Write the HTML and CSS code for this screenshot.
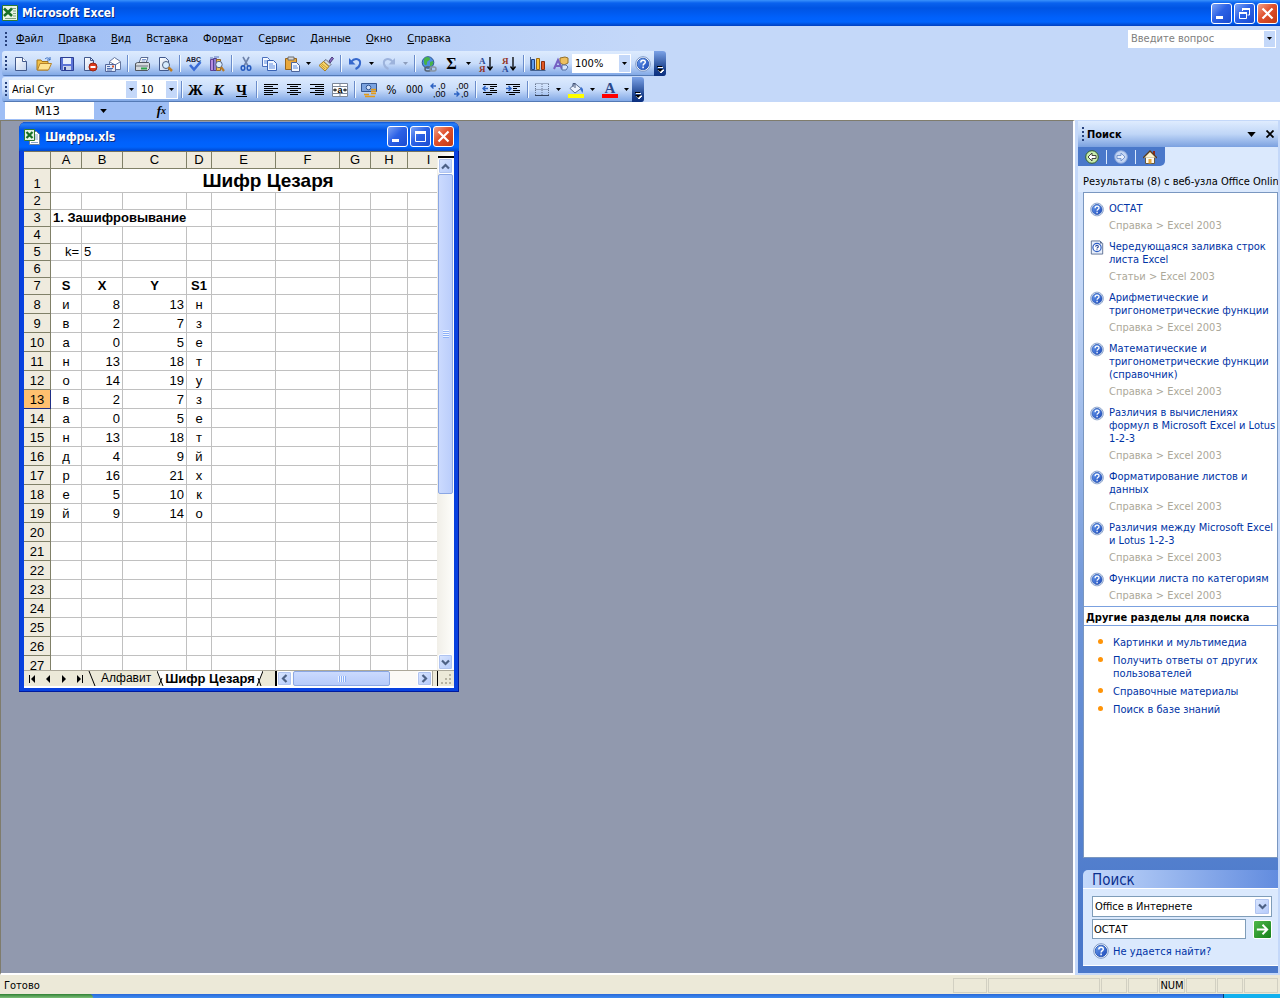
FILE: index.html
```html
<!DOCTYPE html>
<html lang="ru">
<head>
<meta charset="utf-8">
<title>Microsoft Excel</title>
<link rel="stylesheet" href="styles.css">
</head>
<body>
<svg class="gradients" aria-hidden="true">
  <linearGradient id="gBlue" x1="0" y1="0" x2="1" y2="1"><stop offset="0" stop-color="#6b9ff0"/><stop offset="1" stop-color="#1a46b8"/></linearGradient>
  <linearGradient id="gSheet" x1="0" y1="0" x2="1" y2="1"><stop offset="0" stop-color="#fff"/><stop offset="1" stop-color="#c3d3ee"/></linearGradient>
</svg>
<svg class="symbols" aria-hidden="true">
  <symbol id="excel" viewBox="0 0 16 16"><path d="M.5.500h15v15H.5z" fill="#e9f4e4" stroke="#2d7a33"/><path d="M10 3.500h4M11 6h3M11 8.500h3M11 11h3M3 13.500h11" stroke="#7fa57f"/><path d="M2 3.500l8 7.500M10 3.500L2 11" stroke="#187026" stroke-width="2.600"/></symbol>
  <symbol id="workbook" viewBox="0 0 16 16"><path d="M5.500 2.500h7l3 3v10h-10z" fill="#fff" stroke="#6b7f9b"/><path d="M11 6h3M11 8h3M7 13.500h7M11 10h3" stroke="#8aa3c8"/><path d="M.5.500h10v11H.5z" fill="#e5f3e2" stroke="#2d7a33"/><path d="M2.500 3l6 6M8.500 3l-6 6" stroke="#187026" stroke-width="2.200"/></symbol>
  <symbol id="down" viewBox="0 0 5 3"><path d="M0 0h5L2.500 3z" fill="currentColor"/></symbol>
  <symbol id="new" viewBox="0 0 16 16"><path d="M2.500 1.500h7l4 4v9h-11z" fill="url(#gSheet)" stroke="#42598c"/><path d="M9.500 1.500v4h4" fill="#fff" stroke="#42598c"/></symbol>
  <symbol id="open" viewBox="0 0 16 16"><path d="M1 14V4h4l1 1.500h6V14z" fill="#f2c14a" stroke="#a5761b"/><path d="M1.500 14L4 7.500h11.500L12.500 14z" fill="#ffe493" stroke="#b5822a"/><path d="M9 3c2-2 4-1 5 1m0-3v3h-3" fill="none" stroke="#356bc0"/></symbol>
  <symbol id="save" viewBox="0 0 16 16"><path d="M1.500 1.500h13v13h-12l-1-1z" fill="#5b73d6" stroke="#2b3f93"/><path d="M4 2h8v6H4z" fill="#e6eefc"/><path d="M4 10h8v4H4z" fill="#c9d3ea"/><path d="M5 11h2v3H5z" fill="#2b3f93"/></symbol>
  <symbol id="perm" viewBox="0 0 16 16"><path d="M2.500 1.500h6l3 3v10h-9z" fill="url(#gSheet)" stroke="#42598c"/><path d="M8.500 1.500v3h3" fill="none" stroke="#42598c"/><circle cx="11" cy="11" r="4" fill="#dd3a1c" stroke="#992410"/><path d="M8.500 11h5" stroke="#fff" stroke-width="2"/></symbol>
  <symbol id="mail" viewBox="0 0 16 16"><path d="M4.500 5.500l5-4 6 4v8h-11z" fill="#fff" stroke="#66779e"/><path d="M5 6l5 3 5-3" fill="none" stroke="#66779e"/><path d="M.5 8.500h10v7H.5z" fill="#e4ebf9" stroke="#53679b"/><path d="M2 10.500h3M2 12.500h6M2 14h5" stroke="#4c6cae"/><path d="M7 9.500h2v2H7z" fill="#df5a2a"/></symbol>
  <symbol id="print" viewBox="0 0 16 16"><path d="M5 7l2-5.500h7L12 7z" fill="#fff" stroke="#596b93"/><path d="M8 3.500h4M7.500 5h4" stroke="#7b96cf"/><path d="M1.500 7.500l2-1h11l1 1v5l-2 2h-12z" fill="#d6d9dd" stroke="#4f555e"/><path d="M2 10h12" stroke="#6e757e"/><path d="M7 12.500h6" stroke="#2da34a" stroke-width="2"/></symbol>
  <symbol id="preview" viewBox="0 0 16 16"><path d="M2.500 1.500h6l3 3v10h-9z" fill="url(#gSheet)" stroke="#42598c"/><circle cx="9" cy="9" r="3.500" fill="#d7ecff" stroke="#50607d"/><path d="M11.500 11.500l3.500 3.500" stroke="#bf7c1e" stroke-width="2.500"/></symbol>
  <symbol id="spell" viewBox="0 0 16 16"><text x="0" y="6" font-family="Liberation Sans" font-size="7" font-weight="bold" fill="#223">ABC</text><path d="M4 9l4 4.500L14.500 6" fill="none" stroke="#3a6bd6" stroke-width="2.600"/></symbol>
  <symbol id="research" viewBox="0 0 16 16"><path d="M1.500 3.500h3v11h-3z" fill="#b48ade" stroke="#604294"/><path d="M4.500 2.500h3v12h-3z" fill="#8e7ccf" stroke="#4d3f92"/><path d="M7.500 3.500h4v11h-4z" fill="#e8bf62" stroke="#94692a"/><path d="M1 2h3M5 1h5" stroke="#5d75b9"/><circle cx="10" cy="8.500" r="3.200" fill="#dceeff" stroke="#566684"/><path d="M12 11l3 4" stroke="#b97a24" stroke-width="2.200"/></symbol>
  <symbol id="cut" viewBox="0 0 16 16"><path d="M5 1l5 9M11 1L6 10" stroke="#6f83aa" stroke-width="1.600"/><ellipse cx="5" cy="12" rx="1.800" ry="2.300" fill="none" stroke="#2459bd" stroke-width="1.500"/><ellipse cx="11" cy="12" rx="1.800" ry="2.300" fill="none" stroke="#2459bd" stroke-width="1.500"/></symbol>
  <symbol id="copy" viewBox="0 0 16 16"><path d="M1.500 1.500h5l2 2v7h-7z" fill="#f1f6ff" stroke="#4b70bd"/><path d="M3 5h4M3 7h4" stroke="#5f8de0"/><path d="M6.500 4.500h6l3 3v7h-9z" fill="#f1f6ff" stroke="#3862b4"/><path d="M8 8h4M8 10h6M8 12h6" stroke="#5f8de0"/></symbol>
  <symbol id="paste" viewBox="0 0 16 16"><path d="M1.500 2.500h11v11h-11z" fill="#e8a83d" stroke="#98651c"/><path d="M4 1h6v3H4z" fill="#d8d8d8" stroke="#6c6c6c"/><path d="M7.500 6.500h5l3 3v6h-8z" fill="#f3f7ff" stroke="#4d659b"/><path d="M9 10h4M9 12h5" stroke="#5f8de0"/></symbol>
  <symbol id="brush" viewBox="0 0 16 16"><path d="M11 5l3-4 1.500 1.500L12 7z" fill="#8d6fc8" stroke="#4b3b78"/><path d="M8 3.500l5 5-2 2-5.500-5z" fill="#d5d9e2" stroke="#626b7e"/><path d="M5.500 5.500l5.500 5-4 4.500L1 9.500z" fill="#f6d56a" stroke="#a67c22"/><path d="M4 8l5 4M3 9l4 4" stroke="#c99a35"/></symbol>
  <symbol id="undo" viewBox="0 0 16 16"><path d="M4 6c4-5 10-3 9 2-.4 2-2 4-4.500 5" fill="none" stroke="currentColor" stroke-width="2"/><path d="M2 2v6.500h6.500z" fill="currentColor"/></symbol>
  <symbol id="globe" viewBox="0 0 16 16"><circle cx="7" cy="6.500" r="5.800" fill="#4c8de0" stroke="#2c5594"/><path d="M3 3c2-3 6-2 6 0s-3 1-3 4-2 3-3 0zM9 6l3-1c1 3-1 5-3 5z" fill="#46b248"/><rect x="4" y="11" width="6" height="4" rx="2" fill="none" stroke="#53606e" stroke-width="1.500"/><rect x="9" y="11" width="6" height="4" rx="2" fill="none" stroke="#8894a2" stroke-width="1.500"/></symbol>
  <symbol id="chart" viewBox="0 0 16 16"><path d="M.5 1v13.500h15" fill="none" stroke="#44618e"/><path d="M1.500 3.500h3v10h-3z" fill="#5d9bea" stroke="#1f4183"/><path d="M6.500 2.500h3v11h-3z" fill="#ffc232" stroke="#9a6a13"/><path d="M11.500 5.500h3v8h-3z" fill="#e25724" stroke="#8b2d0d"/></symbol>
  <symbol id="draw" viewBox="0 0 16 16"><path d="M7 2l5-1 3 1v5l-4 2-4-2z" fill="#eebf5e" stroke="#94702b"/><path d="M1 13L5 4l4 9M2.500 10h5" fill="none" stroke="#7560c3" stroke-width="2"/><path d="M9 9h4l2 2-2 3H9z" fill="#d4e3fa" stroke="#5571a6"/></symbol>
  <symbol id="help" viewBox="0 0 16 16"><circle cx="8" cy="8" r="7.300" fill="#fff" stroke="#7c97c6"/><circle cx="8" cy="8" r="5.800" fill="url(#gBlue)" stroke="#1e4fae" stroke-width=".8"/><path d="M5.800 6.500c0-3 4.500-3 4.500-.3 0 1.500-2.200 1.500-2.200 3.300M8.100 10.500v1.800" fill="none" stroke="#fff" stroke-width="1.500"/></symbol>
  <symbol id="article" viewBox="0 0 16 16"><path d="M1.500.5h10l3 3v12h-13z" fill="#e8effb" stroke="#53688e"/><path d="M11.500.5v3h3" fill="#53688e"/><circle cx="8" cy="8" r="4.700" fill="#fff" stroke="#2e5fc4" stroke-width="1.400"/><path d="M6.500 7c0-2 3-2 3 0 0 1-1.500 1-1.500 2.200M8 10v1" fill="none" stroke="#1c3f96" stroke-width="1.200"/></symbol>
  <symbol id="al" viewBox="0 0 16 16"><path d="M1 2.500h14M1 4.500h9M1 6.500h14M1 8.500h9M1 10.500h14M1 12.500h9" stroke="#000"/></symbol>
  <symbol id="ac" viewBox="0 0 16 16"><path d="M1 2.500h14M4 4.500h8M1 6.500h14M4 8.500h8M1 10.500h14M4 12.500h8" stroke="#000"/></symbol>
  <symbol id="ar" viewBox="0 0 16 16"><path d="M1 2.500h14M6 4.500h9M1 6.500h14M6 8.500h9M1 10.500h14M6 12.500h9" stroke="#000"/></symbol>
  <symbol id="merge" viewBox="0 0 16 16"><path d="M.5 1.500h15v13H.5zM.5 4.500h15M.5 11.500h15M8 1.500v3M8 11.500v3" fill="#fff" stroke="#7c8798"/><path d="M1 8h4M11 8h4M3 6.500v3M13 6.500v3" stroke="#000"/><text x="5.500" y="10.500" font-family="Liberation Sans" font-weight="bold" font-size="9">a</text></symbol>
  <symbol id="money" viewBox="0 0 16 16"><path d="M.5 1.500h15v8H.5z" fill="#7ba3e0" stroke="#355792"/><circle cx="7.500" cy="5.500" r="2.300" fill="#cfe0fa" stroke="#355792"/><path d="M10 7.500h5M10 9.500h5M10 11.500h5M3 12.500h5M4 14.500h10" stroke="#e39a18" stroke-width="1.700"/></symbol>
  <symbol id="incdec" viewBox="0 0 16 16"><path d="M1 4h5M3.500 1.500L1 4l2.500 2.500" fill="none" stroke="#2c62c2" stroke-width="1.400"/><text x="8" y="7" font-family="Liberation Sans" font-size="9">,0</text><text x="3" y="15" font-family="Liberation Sans" font-size="9">,00</text></symbol>
  <symbol id="decdec" viewBox="0 0 16 16"><path d="M1 12h5M3.500 9.500L6 12l-2.500 2.500" fill="none" stroke="#2c62c2" stroke-width="1.400"/><text x="3" y="7" font-family="Liberation Sans" font-size="9">,00</text><text x="8" y="15" font-family="Liberation Sans" font-size="9">,0</text></symbol>
  <symbol id="outd" viewBox="0 0 16 16"><path d="M1 2.500h14M8 4.500h7M8 6.500h4M8 8.500h7M1 10.500h14M4 12.500h6" stroke="#000"/><path d="M1 6.500h5M3.500 4L1 6.500 3.500 9" fill="none" stroke="#2c62c2" stroke-width="1.500"/></symbol>
  <symbol id="ind" viewBox="0 0 16 16"><path d="M1 2.500h14M8 4.500h7M8 6.500h4M8 8.500h7M1 10.500h14M4 12.500h6" stroke="#000"/><path d="M1 6.500h5M3.500 4L6 6.500 3.500 9" fill="none" stroke="#2c62c2" stroke-width="1.500"/></symbol>
  <symbol id="borders" viewBox="0 0 16 16"><path d="M1.500 1.500h13M1.500 7.500h13M1.500 2v11M8 2v11M14.500 2v11" stroke="#66758f" stroke-dasharray="1 1"/><path d="M1 13.500h14" stroke="#33435f"/></symbol>
  <symbol id="fill" viewBox="0 0 16 16"><path d="M7 1.500l6 5-6 4.500-5-4.500z" fill="#eaf1fc" stroke="#5b6d90"/><path d="M5 5V1.500h2V6" fill="none" stroke="#47577a"/><path d="M13 5c3 2 2 4 1.500 6L12 7z" fill="#386fce"/><path d="M0 12h16v4H0z" fill="#ff0"/></symbol>
  <symbol id="fontc" viewBox="0 0 16 16"><text x="2.500" y="11" font-family="Liberation Serif" font-weight="bold" font-size="15" fill="#2c4a8c">A</text><path d="M0 12h16v4H0z" fill="red"/></symbol>
  <symbol id="sorta" viewBox="0 0 16 16"><text x="1" y="7.500" font-family="Liberation Serif" font-weight="bold" font-size="9" fill="#2b4a96">А</text><text x="1" y="15.500" font-family="Liberation Serif" font-weight="bold" font-size="9" fill="#943326">Я</text><path d="M12 1v12M9.500 10.500L12 14l2.500-3.500" fill="none" stroke="#000" stroke-width="1.300"/></symbol>
  <symbol id="sortd" viewBox="0 0 16 16"><text x="1" y="7.500" font-family="Liberation Serif" font-weight="bold" font-size="9" fill="#943326">Я</text><text x="1" y="15.500" font-family="Liberation Serif" font-weight="bold" font-size="9" fill="#2b4a96">А</text><path d="M12 1v12M9.500 10.500L12 14l2.500-3.500" fill="none" stroke="#000" stroke-width="1.300"/></symbol>
  <symbol id="min" viewBox="0 0 19 19"><path d="M4 12h7v3H4z" fill="#fff"/></symbol>
  <symbol id="max" viewBox="0 0 19 19"><path d="M4.500 4v10.500h10V4" fill="none" stroke="#fff"/><path d="M4 4h11v3H4z" fill="#fff"/></symbol>
  <symbol id="restore" viewBox="0 0 19 19"><path d="M7.500 7V5h7v6h-2" fill="none" stroke="#fff"/><path d="M7 4h8v2H7z" fill="#fff"/><path d="M4.500 8.500h7v6h-7z" fill="none" stroke="#fff"/><path d="M4 8h8v2H4z" fill="#fff"/></symbol>
  <symbol id="close" viewBox="0 0 19 19"><path d="M4.500 4.500l10 10M14.500 4.500l-10 10" stroke="#fff" stroke-width="2.200"/></symbol>
  <symbol id="chevd" viewBox="0 0 9 9"><path d="M1 2.500l3.500 3.500L8 2.500" fill="none" stroke="#4d6185" stroke-width="2.200"/></symbol>
  <symbol id="chevu" viewBox="0 0 9 9"><path d="M1 6.500L4.500 3 8 6.500" fill="none" stroke="#4d6185" stroke-width="2.200"/></symbol>
  <symbol id="chevl" viewBox="0 0 9 9"><path d="M6.500 1L3 4.500 6.500 8" fill="none" stroke="#4d6185" stroke-width="2.200"/></symbol>
  <symbol id="chevr" viewBox="0 0 9 9"><path d="M2.500 1L6 4.500 2.500 8" fill="none" stroke="#4d6185" stroke-width="2.200"/></symbol>
  <symbol id="more" viewBox="0 0 8 8"><path d="M2 1.500h5M2 4h6L5 7z" stroke="#fff" fill="#fff"/><path d="M1 .5h5" stroke="#000"/><path d="M1 3h6L4 6z" fill="#000"/></symbol>
</svg>

<header class="titlebar">
  <svg class="i16"><use href="#excel"/></svg>
  <h1>Microsoft Excel</h1>
  <div class="winbtns">
    <button aria-label="Свернуть"><svg><use href="#min"/></svg></button>
    <button aria-label="Восстановить"><svg><use href="#restore"/></svg></button>
    <button class="close" aria-label="Закрыть"><svg><use href="#close"/></svg></button>
  </div>
</header>

<nav class="menubar">
  <span class="grip"></span>
  <button><u>Ф</u>айл</button><button><u>П</u>равка</button><button><u>В</u>ид</button><button>Вст<u>а</u>вка</button><button>Фор<u>м</u>ат</button><button>С<u>е</u>рвис</button><button><u>Д</u>анные</button><button><u>О</u>кно</button><button><u>С</u>правка</button>
  <label class="ask"><input type="text" placeholder="Введите вопрос" aria-label="Введите вопрос"><span class="drop"><svg><use href="#down"/></svg></span></label>
</nav>

<div class="dock">
<div class="toolbar">
  <span class="grip"></span>
  <button class="tb" aria-label="Создать"><svg><use href="#new"/></svg></button>
  <button class="tb" aria-label="Открыть"><svg><use href="#open"/></svg></button>
  <button class="tb" aria-label="Сохранить"><svg><use href="#save"/></svg></button>
  <button class="tb" aria-label="Разрешения"><svg><use href="#perm"/></svg></button>
  <button class="tb" aria-label="Сообщение"><svg><use href="#mail"/></svg></button>
  <i class="sep"></i>
  <button class="tb" aria-label="Печать"><svg><use href="#print"/></svg></button>
  <button class="tb" aria-label="Предварительный просмотр"><svg><use href="#preview"/></svg></button>
  <i class="sep"></i>
  <button class="tb" aria-label="Орфография"><svg><use href="#spell"/></svg></button>
  <button class="tb" aria-label="Справочные материалы"><svg><use href="#research"/></svg></button>
  <i class="sep"></i>
  <button class="tb" aria-label="Вырезать"><svg><use href="#cut"/></svg></button>
  <button class="tb" aria-label="Копировать"><svg><use href="#copy"/></svg></button>
  <button class="tb" aria-label="Вставить"><svg><use href="#paste"/></svg></button>
  <button class="arr" aria-label="Параметры вставки"><svg><use href="#down"/></svg></button>
  <button class="tb" aria-label="Формат по образцу"><svg><use href="#brush"/></svg></button>
  <i class="sep"></i>
  <button class="tb undo" aria-label="Отменить"><svg><use href="#undo"/></svg></button>
  <button class="arr" aria-label="Список отмены"><svg><use href="#down"/></svg></button>
  <button class="tb redo" aria-label="Вернуть"><svg><use href="#undo"/></svg></button>
  <button class="arr off" aria-label="Список возврата"><svg><use href="#down"/></svg></button>
  <i class="sep"></i>
  <button class="tb" aria-label="Гиперссылка"><svg><use href="#globe"/></svg></button>
  <button class="tb sigma">Σ</button>
  <button class="arr" aria-label="Функции"><svg><use href="#down"/></svg></button>
  <button class="tb" aria-label="По возрастанию"><svg><use href="#sorta"/></svg></button>
  <button class="tb" aria-label="По убыванию"><svg><use href="#sortd"/></svg></button>
  <i class="sep"></i>
  <button class="tb" aria-label="Диаграмма"><svg><use href="#chart"/></svg></button>
  <button class="tb" aria-label="Рисование"><svg><use href="#draw"/></svg></button>
  <label class="combo zoom"><select aria-label="Масштаб"><option>100%</option></select><span class="drop"><svg><use href="#down"/></svg></span></label>
  <button class="tb" aria-label="Справка"><svg><use href="#help"/></svg></button>
  <button class="end" aria-label="Параметры панели"><svg><use href="#more"/></svg></button>
</div>
<div class="toolbar">
  <span class="grip"></span>
  <label class="combo font"><select aria-label="Шрифт"><option>Arial Cyr</option></select><span class="drop"><svg><use href="#down"/></svg></span></label>
  <label class="combo size"><select aria-label="Размер"><option>10</option></select><span class="drop"><svg><use href="#down"/></svg></span></label>
  <i class="sep"></i>
  <button class="tb letter">Ж</button>
  <button class="tb letter"><em>К</em></button>
  <button class="tb letter"><u>Ч</u></button>
  <i class="sep"></i>
  <button class="tb" aria-label="По левому краю"><svg><use href="#al"/></svg></button>
  <button class="tb" aria-label="По центру"><svg><use href="#ac"/></svg></button>
  <button class="tb" aria-label="По правому краю"><svg><use href="#ar"/></svg></button>
  <button class="tb" aria-label="Объединить"><svg><use href="#merge"/></svg></button>
  <i class="sep"></i>
  <button class="tb" aria-label="Денежный формат"><svg><use href="#money"/></svg></button>
  <button class="tb fmt pct">%</button>
  <button class="tb fmt">000</button>
  <button class="tb" aria-label="Увеличить разрядность"><svg><use href="#incdec"/></svg></button>
  <button class="tb" aria-label="Уменьшить разрядность"><svg><use href="#decdec"/></svg></button>
  <i class="sep"></i>
  <button class="tb" aria-label="Уменьшить отступ"><svg><use href="#outd"/></svg></button>
  <button class="tb" aria-label="Увеличить отступ"><svg><use href="#ind"/></svg></button>
  <i class="sep"></i>
  <button class="tb" aria-label="Границы"><svg><use href="#borders"/></svg></button>
  <button class="arr" aria-label="Виды границ"><svg><use href="#down"/></svg></button>
  <button class="tb" aria-label="Цвет заливки"><svg><use href="#fill"/></svg></button>
  <button class="arr" aria-label="Цвета заливки"><svg><use href="#down"/></svg></button>
  <button class="tb" aria-label="Цвет шрифта"><svg><use href="#fontc"/></svg></button>
  <button class="arr" aria-label="Цвета шрифта"><svg><use href="#down"/></svg></button>
  <button class="end" aria-label="Параметры панели"><svg><use href="#more"/></svg></button>
</div>
</div>

<div class="formulabar">
  <input class="namebox" type="text" value="M13" aria-label="Имя ячейки">
  <div class="fxarea"><button class="arr" aria-label="Список имён"><svg><use href="#down"/></svg></button><button class="fx">f<small>x</small></button></div>
  <input class="formula" type="text" aria-label="Строка формул">
</div>

<main class="main">
  <section class="workspace">
    <div class="book">
      <div class="booktitle">
        <svg class="i16"><use href="#workbook"/></svg>
        <h2>Шифры.xls</h2>
        <div class="winbtns">
          <button aria-label="Свернуть"><svg><use href="#min"/></svg></button>
          <button aria-label="Развернуть"><svg><use href="#max"/></svg></button>
          <button class="close" aria-label="Закрыть"><svg><use href="#close"/></svg></button>
        </div>
      </div>
      <div class="bookbody">
        <div class="sheetrow">
          <div class="sheet">
            <table>
              <colgroup><col class="c0"><col class="w31"><col class="w41"><col class="w64"><col class="w25"><col class="w64"><col class="w64"><col class="w31"><col class="w37"><col class="w42"><col class="w36"></colgroup>
              <thead><tr><th></th><th>A</th><th>B</th><th>C</th><th>D</th><th>E</th><th>F</th><th>G</th><th>H</th><th>I</th><th></th></tr></thead>
              <tbody id="cells"></tbody>
            </table>
          </div>
          <div class="vscroll">
            <span class="split"></span>
            <button class="sb" aria-label="Вверх"><svg><use href="#chevu"/></svg></button>
            <span class="thumb"></span>
            <span class="track"></span>
            <button class="sb" aria-label="Вниз"><svg><use href="#chevd"/></svg></button>
          </div>
        </div>
        <div class="tabsrow">
          <button class="nav" aria-label="Первый лист"><svg viewBox="0 0 8 8"><path d="M1 0h1v8H1zM7 0v8L3 4z"/></svg></button>
          <button class="nav" aria-label="Предыдущий лист"><svg viewBox="0 0 8 8"><path d="M6 0v8L2 4z"/></svg></button>
          <button class="nav" aria-label="Следующий лист"><svg viewBox="0 0 8 8"><path d="M2 0v8l4-4z"/></svg></button>
          <button class="nav" aria-label="Последний лист"><svg viewBox="0 0 8 8"><path d="M6 0h1v8H6zM1 0v8l4-4z"/></svg></button>
          <svg class="slash" viewBox="0 0 8 16"><path d="M1 0l6 15" stroke="#000" fill="none"/></svg>
          <button class="tab">Алфавит</button>
          <svg class="slash" viewBox="0 0 8 16"><path d="M0 0h8v16H6z" fill="#fff"/><path d="M0 0l6 15M2 14l3-7" stroke="#000" fill="none"/></svg>
          <button class="tab active">Шифр Цезаря</button>
          <svg class="slash" viewBox="0 0 8 16"><path d="M0 0h8L2 16H0z" fill="#fff"/><path d="M8 0L2 15M3 7l3 8" stroke="#000" fill="none"/></svg>
          <span class="tabfill"></span>
          <div class="hscroll">
            <button class="sb" aria-label="Влево"><svg><use href="#chevl"/></svg></button>
            <span class="thumb"></span><span class="track"></span>
            <button class="sb" aria-label="Вправо"><svg><use href="#chevr"/></svg></button>
          </div>
          <span class="hsplit"></span>
          <svg class="size-grip" viewBox="0 0 16 16"><path d="M11 3h2v2h-2zM7 7h2v2H7zM11 7h2v2h-2zM3 11h2v2H3zM7 11h2v2H7zM11 11h2v2h-2z" fill="#b8b4a2"/></svg>
        </div>
      </div>
    </div>
  </section>

  <aside class="pane">
    <div class="panehead"><span class="grip"></span><h2>Поиск</h2>
      <button aria-label="Другие области"><svg class="ptri"><use href="#down"/></svg></button>
      <button aria-label="Закрыть область"><svg class="px" viewBox="0 0 8 8"><path d="M.5.500l7 7M7.500.500l-7 7" stroke="#000" stroke-width="1.800"/></svg></button>
    </div>
    <div class="panenav"><div class="navtab">
      <button aria-label="Назад"><svg viewBox="0 0 14 14"><circle cx="7" cy="7" r="6.300" fill="#c9ecae" stroke="#2f5d2c"/><path d="M11 5.500H7V3L3 7l4 4V8.500h4z" fill="#fff" stroke="#333" stroke-width=".9"/></svg></button><i></i>
      <button aria-label="Вперёд"><svg viewBox="0 0 14 14"><circle cx="7" cy="7" r="6.300" fill="#c3d5f3" stroke="#8aa6da"/><path d="M3 5.500h4V3l4 4-4 4V8.500H3z" fill="#e6eefc" stroke="#6d8ecb" stroke-width=".9"/></svg></button><i></i>
      <button aria-label="Домой"><svg viewBox="0 0 14 14"><path d="M2.500 7h9v6.500h-9z" fill="#fdfaf0" stroke="#6a5a3a"/><path d="M10 1h2v4h-2z" fill="#8f2a1b"/><path d="M1 7.500L7 1.500l6 6z" fill="#fdf3cf"/><path d="M0 8l7-7 7 7" fill="none" stroke="#5a3d1c" stroke-width="1.300"/><path d="M5.500 9h3v4.500h-3z" fill="#e7a63a"/></svg></button>
    </div></div>
    <p class="results">Результаты (8) с веб-узла Office Online</p>
    <div class="list">
      <ul class="hits">
        <li><svg><use href="#help"/></svg><div><a href="#">ОСТАТ</a><span>Справка &gt; Excel 2003</span></div></li>
        <li><svg><use href="#article"/></svg><div><a href="#">Чередующаяся заливка строк<br>листа Excel</a><span>Статьи &gt; Excel 2003</span></div></li>
        <li><svg><use href="#help"/></svg><div><a href="#">Арифметические и<br>тригонометрические функции</a><span>Справка &gt; Excel 2003</span></div></li>
        <li><svg><use href="#help"/></svg><div><a href="#">Математические и<br>тригонометрические функции<br>(справочник)</a><span>Справка &gt; Excel 2003</span></div></li>
        <li><svg><use href="#help"/></svg><div><a href="#">Различия в вычислениях<br>формул в Microsoft Excel и Lotus<br>1-2-3</a><span>Справка &gt; Excel 2003</span></div></li>
        <li><svg><use href="#help"/></svg><div><a href="#">Форматирование листов и<br>данных</a><span>Справка &gt; Excel 2003</span></div></li>
        <li><svg><use href="#help"/></svg><div><a href="#">Различия между Microsoft Excel<br>и Lotus 1-2-3</a><span>Справка &gt; Excel 2003</span></div></li>
        <li><svg><use href="#help"/></svg><div><a href="#">Функции листа по категориям</a><span>Справка &gt; Excel 2003</span></div></li>
      </ul>
      <h3>Другие разделы для поиска</h3>
      <ul class="more">
        <li><a href="#">Картинки и мультимедиа</a></li>
        <li><a href="#">Получить ответы от других<br>пользователей</a></li>
        <li><a href="#">Справочные материалы</a></li>
        <li><a href="#">Поиск в базе знаний</a></li>
      </ul>
    </div>
    <form class="search">
      <h3>Поиск</h3>
      <div class="searchbody">
        <label class="where"><select aria-label="Где искать"><option>Office в Интернете</option></select><span class="sb"><svg><use href="#chevd"/></svg></span></label>
        <div class="queryrow"><input type="text" value="ОСТАТ" aria-label="Что искать"><button type="button" class="go" aria-label="Найти"><svg viewBox="0 0 18 18"><path d="M3 9h11M9 4l5 5-5 5" fill="none" stroke="#fff" stroke-width="2"/></svg></button></div>
        <div class="notfound"><svg><use href="#help"/></svg><a href="#">Не удается найти?</a></div>
      </div>
    </form>
  </aside>
</main>

<footer class="status"><span>Готово</span>
  <div class="cells"><i class="s34"></i><i class="s112"></i><i class="s26"></i><i class="s30"></i><i class="s26">NUM</i><i class="s30"></i><i class="s26"></i><i class="s34"></i></div>
</footer>
<div class="taskbar"><span class="start"></span><span class="tray"></span></div>
<script src="script.js"></script>
</body>
</html>
```
FILE: styles.css
```css
* { box-sizing: border-box; }
:root { --ui: "DejaVu Sans Condensed", "Noto Sans", sans-serif; --sheet: "Liberation Sans", Arial, sans-serif; }
body { margin: 0; height: 100vh; display: flex; flex-direction: column; overflow: hidden; font: 11px/13px var(--ui); color: #000; background: #c4d8f9; }
h1, h2, h3, p, ul { margin: 0; padding: 0; }
ul { list-style: none; }
button { margin: 0; padding: 0; border: 0; background: none; font: inherit; color: inherit; display: flex; align-items: center; justify-content: center; }
input, select { margin: 0; padding: 0; border: 0; border-radius: 0; font: inherit; color: inherit; background: #fff; min-width: 0; appearance: none; outline: 0; }
svg { display: block; flex: none; }
a { color: #0033a5; text-decoration: none; }
.gradients { position: absolute; width: 0; height: 0; }
.symbols { display: none; }
.i16 { width: 16px; height: 16px; }

.titlebar { flex: none; height: 26px; display: flex; align-items: center; gap: 4px; padding: 0 2px 0 2px; background: linear-gradient(#3a92fc 0, #0a62ee 3px, #0054e3 8px, #0061fc 18px, #0064fd 22px, #0040c0 26px); }
.titlebar h1, .booktitle h2 { flex: 1; font: bold 12px/16px var(--ui); color: #fff; text-shadow: 1px 1px 0 #0a2a80; }
.winbtns { display: flex; gap: 2px; }
.winbtns button { width: 21px; height: 21px; border: 1px solid #fff; border-radius: 3px; background: linear-gradient(135deg, #7ea4f5, #2c62e6 45%, #1a4bd0); }
.winbtns .close { background: linear-gradient(135deg, #f0a088, #e0502c 45%, #c03a14); }
.winbtns svg { width: 19px; height: 19px; }

.menubar { flex: none; height: 25px; display: flex; align-items: center; padding: 0 4px 0 5px; background: linear-gradient(90deg, #9ebef5, #c4d8f9 50%); }
.menubar > button { padding: 0 8px 0 7px; height: 20px; display: block; }
.grip { flex: none; width: 4px; height: 14px; background: repeating-linear-gradient(#27417c 0 2px, transparent 2px 4px) 0 0 / 2px 100% no-repeat; }
.ask { margin-left: auto; width: 148px; height: 18px; display: flex; border: 1px solid #fff; background: #fff; }
.ask input { flex: 1; padding-left: 2px; }
.ask input::placeholder { color: #808080; opacity: 1; }
.drop { flex: none; width: 11px; display: flex; align-items: center; justify-content: center; background: #c4d8f9; }
.drop svg, .arr svg { width: 5px; height: 3px; }

.dock { flex: none; display: flex; flex-direction: column; align-items: flex-start; gap: 1px; background: linear-gradient(90deg, #9ebef5, #c4d8f9 50%); }
.toolbar { height: 25px; display: flex; align-items: center; margin-left: 2px; padding-left: 3px; border-radius: 3px; background: linear-gradient(#ddebfe, #c8dcfa 50%, #85abe7 94%, #3b619c); }
.toolbar .grip { height: 16px; }
.tb { width: 23px; height: 23px; }
.tb svg { width: 16px; height: 16px; }
.arr { width: 11px; height: 22px; }
.off { color: #8d9dbb; }
.undo { color: #3668cc; }
.redo { color: #9db3dc; }
.redo svg { transform: scaleX(-1); }
.sep { width: 6px; height: 17px; border-left: 1px solid #6a8ccb; box-shadow: inset 1px 0 #f1f9ff; margin-left: 3px; margin-right: -3px; }
.sigma { font: bold 16px/20px "Liberation Serif", serif; }
.letter { font: bold 15px/20px "Liberation Serif", serif; }
.fmt { font: 10px/14px var(--ui); }
.pct { font-size: 12px; }
.combo { display: flex; height: 19px; border: 1px solid #fff; background: #fff; }
.combo select { flex: 1; padding-left: 2px; }
.zoom { width: 59px; }
.font { width: 129px; }
.size { width: 40px; }
.end { align-self: stretch; width: 12px; align-items: flex-end; padding-bottom: 2px; border-radius: 0 3px 3px 0; background: linear-gradient(#7ba2e7, #1e448f 70%, #0b2f80); }
.end svg { width: 8px; height: 8px; }

.formulabar { flex: none; height: 18px; display: flex; padding-left: 5px; background: #9ebef5; }
.formulabar input { font: 13px/15px var(--ui); }
.namebox { width: 89px; text-align: center; height: 17px; padding-right: 4px; }
.fxarea { width: 75px; display: flex; justify-content: space-between; padding: 0 3px 0 4px; align-items: center; }
.formulabar .arr svg { width: 7px; height: 4px; }
.fx { font: italic bold 13px/16px "Liberation Serif", serif; }
.fx small { font-size: 10px; }
.formula { flex: 1; }

.main { flex: 1; min-height: 0; display: flex; }
.workspace { flex: 1; min-width: 0; background: #9199ae; border: 1px solid #7f7c6c; border-right: 2px solid #fff; border-bottom: 2px solid #fff; padding: 1px 0 0 18px; }
.book { width: 440px; height: 570px; display: flex; flex-direction: column; padding: 0 5px 4px; border-radius: 7px 7px 0 0; background: #0841de; box-shadow: inset -1px -1px #001a9c, inset 1px 0 #0a2fc0; }
.booktitle { flex: none; height: 29px; margin: 0 -5px; padding: 0 5px; display: flex; align-items: center; gap: 5px; border-radius: 7px 7px 0 0; background: linear-gradient(#0a50d0 0, #2a80fa 2px, #0054e3 8px, #0061fc 20px, #0064fd 25px, #0048d0 29px); }
.bookbody { flex: 1; min-height: 0; display: flex; flex-direction: column; border-top: 1px solid #76745f; background: #ece9d8; border-bottom: 2px solid #fff; }
.sheetrow { flex: 1; min-height: 0; display: flex; }
.sheet { flex: 1; min-width: 0; overflow: hidden; background: #fff; }
table { table-layout: fixed; width: 462px; border-collapse: separate; border-spacing: 0; font: 13px/16px var(--sheet); }
th, td { padding: 0 2px; border: solid #c0c0c0; border-width: 0 1px 1px 0; overflow: hidden; white-space: nowrap; text-align: center; vertical-align: bottom; }
th { font-weight: normal; background: #efebde; border-color: #808068; padding: 0; }
tr { height: 17px; }
tr.title { height: 24px; }
tr.tall { height: 19px; line-height: 17px; }
td.num { text-align: right; }
td.left { text-align: left; }
td.bold { font-weight: bold; }
td.head { font: bold 19px/22px var(--sheet); }
tr.current th { background: #ffc06f; border-color: #1f2f86; }
.c0 { width: 27px; } .w31 { width: 31px; } .w41 { width: 41px; } .w64 { width: 64px; } .w25 { width: 25px; } .w37 { width: 37px; } .w42 { width: 42px; } .w36 { width: 36px; }

.sb { flex: none; width: 15px; height: 16px; border: 1px solid #fff; border-radius: 2px; background: linear-gradient(135deg, #dae6fe, #b4cafb); box-shadow: 0 0 0 1px #b0c4f0 inset; }
.sb svg { width: 9px; height: 9px; }
.vscroll { width: 17px; padding: 4px 1px 0; display: flex; flex-direction: column; align-items: center; background: linear-gradient(90deg, #f1efe8, #fefefb); }
.split { width: 16px; height: 2px; flex: none; background: #000; }
.vscroll .thumb { width: 15px; height: 320px; border: 1px solid #8ba7e4; border-radius: 2px; background: repeating-linear-gradient(#eef4fe 0 1px, #8cb0f8 1px 2px) center / 6px 8px no-repeat, linear-gradient(90deg, #cbdafe, #bacdfb); }
.track { flex: 1; }
.tabsrow { flex: none; height: 16px; display: flex; background: #ece9d8; border-top: 1px solid #aca899; }
.nav { width: 16px; }
.nav svg { width: 8px; height: 8px; }
.slash { width: 8px; height: 16px; }
.tab { font: 12px/15px var(--sheet); padding: 0 6px 0 5px; }
.tab.active { font: bold 13px/15px var(--sheet); background: #fff; padding: 0; }
.tabfill { flex: 1; border-right: 2px solid #000; }
.hscroll { width: 155px; display: flex; background: #fbfaf6; align-items: center; }
.hscroll .sb { height: 15px; }
.hscroll .thumb { width: 97px; height: 15px; margin-left: 1px; border: 1px solid #8ba7e4; border-radius: 2px; background: repeating-linear-gradient(90deg, #eef4fe 0 1px, #8cb0f8 1px 2px) center / 8px 6px no-repeat, linear-gradient(#cbdafe, #b6cafa); }
.hsplit { width: 6px; border-left: 1px solid #aca899; border-right: 1px solid #000; }
.size-grip { width: 16px; height: 16px; }

.pane { flex: none; width: 205px; display: flex; flex-direction: column; border: solid #c4d8f9; border-width: 1px 2px 2px 3px; background: linear-gradient(#dbe9fd, #c3d7f7 20%, #7298d9 55%, #4a78ca 95%); }
.panehead { flex: none; height: 26px; display: flex; align-items: center; gap: 10px; padding: 0 4px; background: linear-gradient(#dfecfe, #c0d6f7 50%, #7ba1e0); }
.panehead .grip { margin-right: -9px; }
.panehead h2 { flex: 1; font: bold 11px/13px var(--ui); }
.ptri { width: 9px; height: 5px; }
.px { width: 8px; height: 8px; }
.panenav { flex: none; height: 19px; background: #dbe9fd; border-radius: 0 5px 0 0; }
.navtab { width: 87px; height: 19px; display: flex; align-items: center; justify-content: space-between; padding: 0 8px 0 7px; background: #4a78ca; border-radius: 0 0 5px 0; }
.navtab svg { width: 14px; height: 14px; }
.navtab i { width: 1px; height: 14px; background: #dbe9fd; }
.results { flex: none; height: 26px; padding: 9px 0 0 5px; overflow: hidden; white-space: nowrap; background: #dbe9fd; }
.list { flex: 1; min-height: 0; overflow: hidden; margin-left: 5px; border: 1px solid #7a97c0; background: #fff; }
.hits { padding: 9px 0 0 6px; }
.hits li { display: flex; gap: 5px; padding-bottom: 8px; white-space: nowrap; }
.hits li:last-child { padding-bottom: 4px; }
.hits svg { width: 14px; height: 15px; }
.hits a, .hits span { display: block; }
.hits span { margin-top: 4px; color: #aca899; }
.list h3 { font: bold 11px/13px var(--ui); padding: 4px 2px 1px; border: solid #7ba1e0; border-width: 1px 0; white-space: nowrap; }
.more { display: flex; flex-direction: column; gap: 5px; padding: 10px 0 0 14px; }
.more li { display: flex; gap: 10px; white-space: nowrap; }
.more li::before { content: ""; flex: none; width: 5px; height: 5px; margin-top: 3px; border-radius: 50%; background: #ff9408; }
.search { flex: none; margin: 12px 0 7px 5px; }
.search h3 { height: 19px; padding-left: 9px; font: 15px/20px var(--ui); color: #0a2f8e; border-radius: 5px 0 0 0; background: linear-gradient(90deg, #c4d9fb, #628cdf); border-bottom: 1px solid #fff; }
.searchbody { display: flex; flex-direction: column; gap: 2px; padding: 7px 6px 6px 9px; background: #dbe9fd; border-bottom: 1px solid #fff; }
.where { display: flex; align-items: center; height: 21px; border: 1px solid #7f9db9; background: #fff; padding-right: 1px; }
.where select { flex: 1; padding-left: 2px; }
.where .sb { display: flex; align-items: center; justify-content: center; width: 16px; height: 17px; }
.queryrow { display: flex; align-items: center; gap: 7px; }
.queryrow input { flex: 1; height: 20px; border: 1px solid #7f9db9; padding-left: 1px; }
.go { width: 19px; height: 19px; border-radius: 2px; background: linear-gradient(135deg, #4fb84a, #15801a); border: 1px solid #fff; }
.go svg { width: 17px; height: 17px; }
.notfound { display: flex; align-items: center; gap: 4px; padding: 2px 0 0 1px; }
.notfound svg { width: 16px; height: 16px; }

.status { flex: none; height: 19px; display: flex; align-items: center; justify-content: space-between; padding: 2px 2px 0 4px; background: #ece9d8; }
.cells { display: flex; gap: 1px; }
.cells i { height: 15px; border: 1px solid #d2d0c2; font-style: normal; line-height: 14px; display: flex; justify-content: center; }
.s34 { width: 34px; } .s112 { width: 112px; } .s26 { width: 26px; } .s30 { width: 30px; }
.taskbar { flex: none; height: 4px; display: flex; justify-content: space-between; background: linear-gradient(#2767d8, #3f8df0); }
.start { width: 93px; background: linear-gradient(#2f8034, #7fc07a); border-radius: 0 4px 0 0; }
.tray { width: 57px; background: #12b0ee; border-left: 1px solid #0a3a70; }
```
FILE: script.js
```js
const letters = "ивановандрей".split("");
const x = [8, 2, 0, 13, 14, 2, 0, 13, 4, 16, 5, 9];
const y = [13, 7, 5, 18, 19, 7, 5, 18, 9, 21, 10, 14];
const out = "нзетузетйхко".split("");
const td = (text, cls) => `<td class="${cls || ""}">${text || ""}</td>`;
const blanks = (n) => td().repeat(n);

function rowCells(n) {
  if (n === 1) return '<td class="head" colspan="10">Шифр Цезаря</td>';
  if (n === 3) return '<td class="left bold" colspan="4">1. Зашифровывание</td>' + blanks(6);
  if (n === 5) return td("k=", "num") + td("5", "left") + blanks(8);
  if (n === 7) return ["S", "X", "Y", "S1"].map((t) => td(t, "bold")).join("") + blanks(6);
  const i = n - 8;
  if (i >= 0 && i < x.length) {
    return td(letters[i]) + td(String(x[i]), "num") + td(String(y[i]), "num") + td(out[i]) + blanks(6);
  }
  return blanks(10);
}

let html = "";
for (let n = 1; n <= 27; n++) {
  const cls = [n === 1 ? "title" : n >= 8 ? "tall" : "", n === 13 ? "current" : ""].join(" ").trim();
  html += `<tr class="${cls}"><th>${n}</th>${rowCells(n)}</tr>`;
}
document.getElementById("cells").innerHTML = html;
```
